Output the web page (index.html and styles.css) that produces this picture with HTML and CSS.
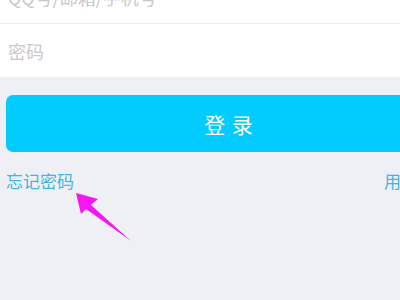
FILE: index.html
```html
<!DOCTYPE HTML>
<html lang="zh-CN">

<head>
  <meta name="viewport" content="width=device-width, initial-scale=1" charset="utf-8">
  <title>登录</title>
  <link rel="stylesheet" href="styles.css">
</head>

<body>
  <div class="login_container">
    <div class="input_list">
      <div class="input_row">
        <input type="text" class="input_text" placeholder="QQ号/邮箱/手机号">
      </div>
      <div class="input_row">
        <input type="password" class="input_text" placeholder="密码">
      </div>
    </div>

    <button type="button" class="button-login">登 录</button>

    <div class="link_container">
      <a class="link" href="#">忘记密码</a>
      <a class="link" href="#">用户注册</a>
    </div>
  </div>

  <!-- annotation arrow -->
  <svg class="arrow" width="400" height="300" viewBox="0 0 400 300">
    <polygon points="76,193 98,199 91,205 131,241 86,209 81,214" fill="#f516f2" />
  </svg>
</body>

</html>
```

FILE: styles.css
```css
body {
  background-color: #eff0f5;
  margin: 0;
  padding: 0;
  width: 400px;
  height: 300px;
  overflow: hidden;
  position: relative;
  font-family: "Noto Sans CJK SC", "Noto Sans", sans-serif;
}

.login_container {
  width: 452px;
}

.input_list {
  background-color: #fff;
  margin-top: -30px;
}

.input_row {
  height: 53px;
  display: flex;
  align-items: center;
  border-bottom: 1px solid #eeeeee;
}

.input_row:last-child {
  border-bottom: none;
}

.input_text {
  border: none;
  outline: none;
  background: transparent;
  width: 100%;
  padding: 0 0 0 8px;
  font-family: inherit;
  font-size: 18px;
  color: #333;
}

.input_text::placeholder {
  color: #c9c9c9;
}

.button-login {
  display: block;
  width: 446px;
  height: 57px;
  margin: 18px 0 0 6px;
  border: none;
  border-radius: 7px;
  background-color: #02cbfd;
  color: #fff;
  font-family: inherit;
  font-size: 21px;
  letter-spacing: 1px;
  cursor: pointer;
}

.link_container {
  display: flex;
  justify-content: space-between;
  margin: 19px 0 0 6px;
}

.link {
  color: #42b6e0;
  font-size: 17px;
  line-height: 20px;
  text-decoration: none;
}

.arrow {
  position: absolute;
  left: 0;
  top: 0;
  pointer-events: none;
}
```
